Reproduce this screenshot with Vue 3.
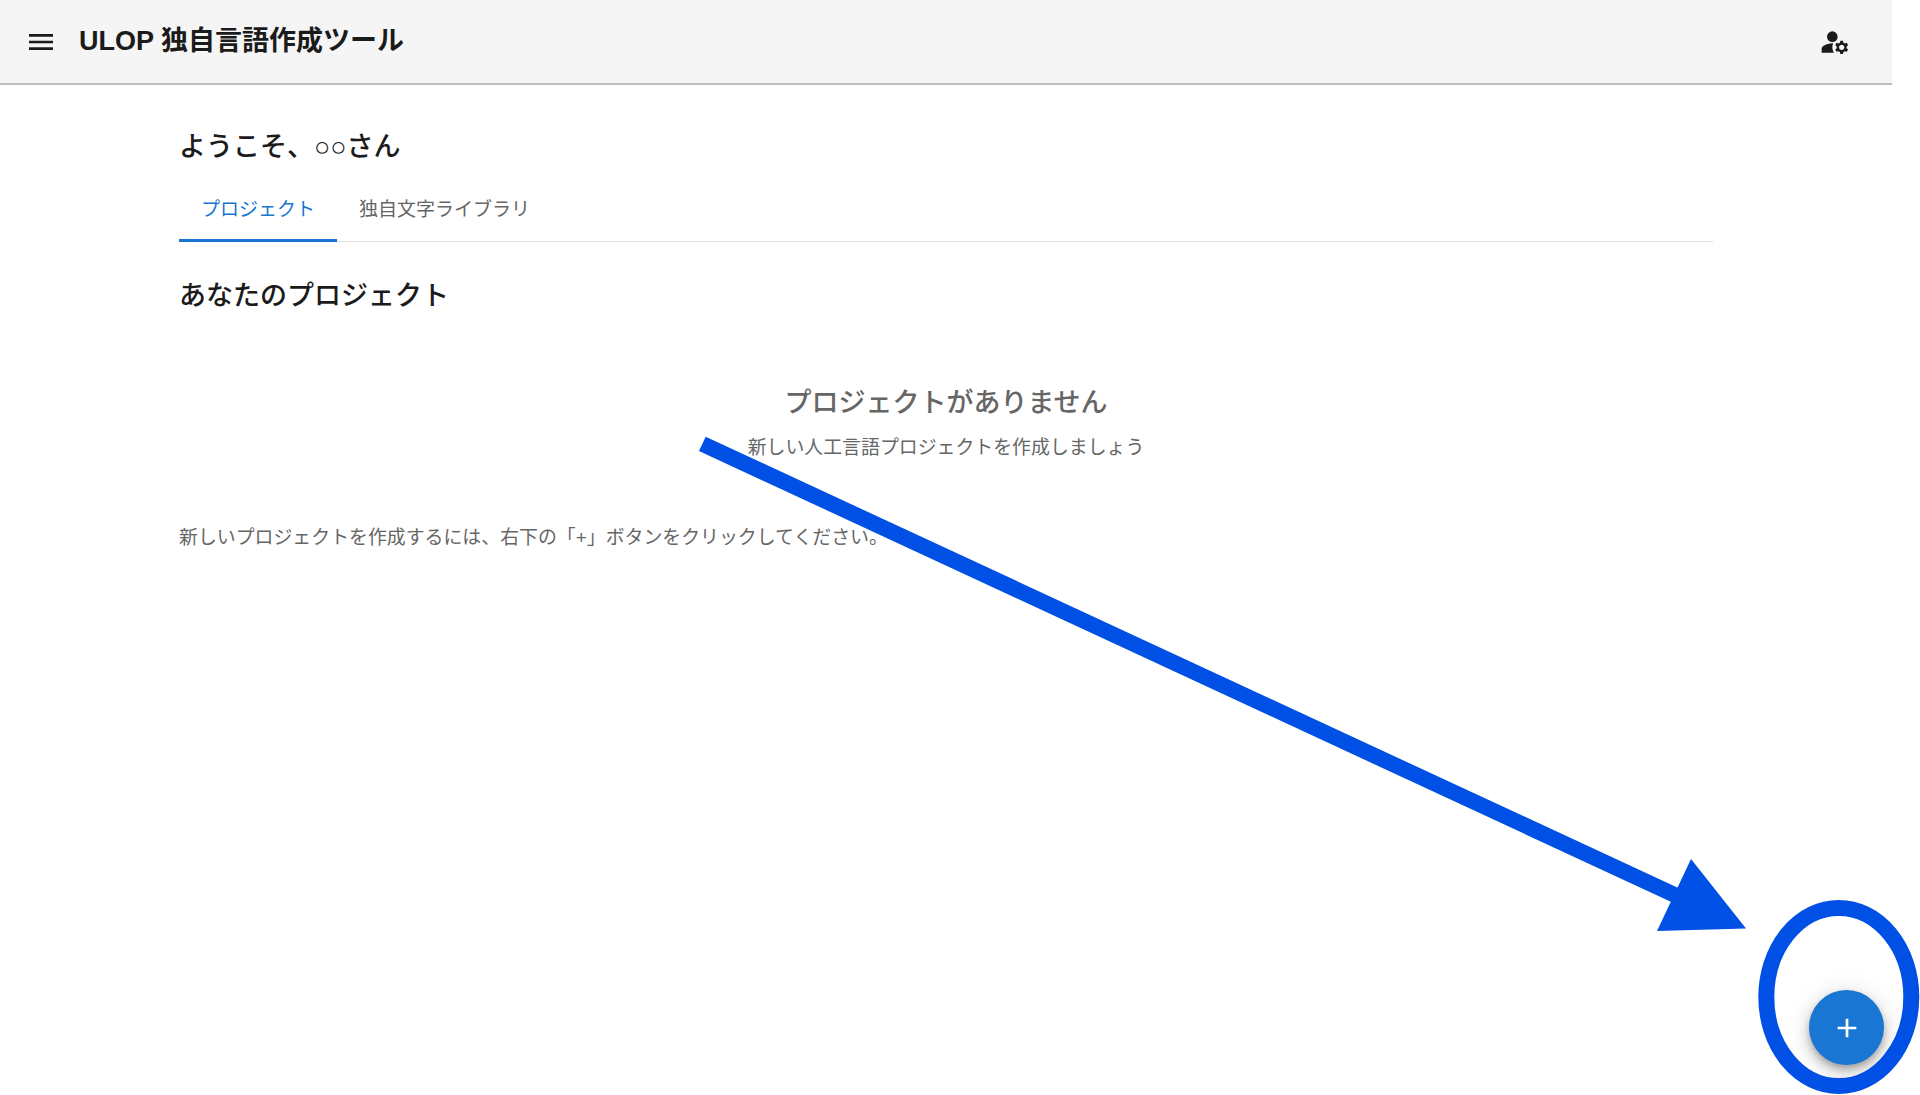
<script setup>
const tabs = [
  { label: 'プロジェクト', active: true },
  { label: '独自文字ライブラリ', active: false },
]
</script>

<template>
  <div class="page">
    <header class="appbar">
      <div class="appbar-left">
        <svg class="icon" viewBox="0 0 24 24" aria-hidden="true">
          <path d="M3 18h18v-2H3zm0-5h18v-2H3zm0-7v2h18V6z" />
        </svg>
        <span class="app-title">ULOP 独自言語作成ツール</span>
      </div>
      <svg class="icon" viewBox="0 0 24 24" aria-hidden="true">
        <circle cx="10" cy="8" r="4" />
        <path d="M10.67 13.02c-.22-.01-.44-.02-.67-.02-2.42 0-4.68.67-6.61 1.82-.88.52-1.39 1.5-1.39 2.53V20h9.26c-.79-1.13-1.26-2.51-1.26-4 0-1.07.25-2.07.67-2.98z" />
        <path d="M20.75 16c0-.22-.03-.42-.06-.63l1.14-1.01-1-1.73-1.45.49c-.32-.27-.68-.48-1.08-.63L18 11h-2l-.3 1.49c-.4.15-.76.36-1.08.63l-1.45-.49-1 1.73 1.14 1.01c-.03.21-.06.41-.06.63s.03.42.06.63l-1.14 1.01 1 1.73 1.45-.49c.32.27.68.48 1.08.63L16 21h2l.3-1.49c.4-.15.76-.36 1.08-.63l1.45.49 1-1.73-1.14-1.01c.03-.21.06-.41.06-.63zM17 18c-1.1 0-2-.9-2-2s.9-2 2-2 2 .9 2 2-.9 2-2 2z" />
      </svg>
    </header>

    <main class="content">
      <h1 class="welcome">ようこそ、○○さん</h1>
      <nav class="tabs">
        <div v-for="tab in tabs" :key="tab.label" class="tab" :class="{ active: tab.active }">{{ tab.label }}</div>
      </nav>
      <h2 class="section-title">あなたのプロジェクト</h2>
      <div class="empty">
        <div class="empty-title">プロジェクトがありません</div>
        <div class="empty-sub">新しい人工言語プロジェクトを作成しましょう</div>
      </div>
      <p class="hint">新しいプロジェクトを作成するには、右下の「+」ボタンをクリックしてください。</p>
    </main>

    <button class="fab" aria-label="追加">
      <svg viewBox="0 0 24 24" aria-hidden="true"><path d="M19 13h-6v6h-2v-6H5v-2h6V5h2v6h6z" /></svg>
    </button>

    <svg class="annotation" viewBox="0 0 1920 1095" aria-hidden="true">
      <polygon class="shaft" points="705.7,436.7 699,451 1680,906 1687,892" />
      <polygon class="head" points="1691,859 1746,928.5 1657,931" />
      <ellipse class="ring" cx="1838.8" cy="997" rx="72.5" ry="89" />
    </svg>
  </div>
</template>

<style>
html, body { margin: 0; background: #fff; }
</style>

<style scoped>
.page {
  position: relative;
  width: 1920px;
  height: 1095px;
  overflow: hidden;
  background: #fff;
  font-family: "Liberation Sans", "Noto Sans CJK JP", sans-serif;
  color: #1b1b1b;
}
.appbar {
  box-sizing: border-box;
  width: 1892px;
  height: 85px;
  padding: 0 41px 0 25px;
  display: flex;
  align-items: center;
  justify-content: space-between;
  background: #f5f5f5;
  border-bottom: 2px solid #bdbdbd;
}
.appbar-left {
  display: flex;
  align-items: center;
  gap: 22px;
}
.icon {
  width: 32px;
  height: 32px;
  fill: #1b1b1b;
  flex: none;
}
.app-title {
  font-size: 27px;
  font-weight: 700;
  line-height: 1;
}
.content {
  box-sizing: border-box;
  width: 1892px;
  padding: 0 179px;
}
.welcome {
  margin: 44px 0 0;
  font-size: 27px;
  font-weight: 500;
  line-height: 36px;
}
.tabs {
  margin-top: 13px;
  display: flex;
  border-bottom: 1px solid #e0e0e0;
}
.tab {
  padding: 0 22px;
  height: 64px;
  line-height: 64px;
  font-size: 19px;
  color: #666;
  box-sizing: border-box;
  margin-bottom: -1px;
}
.tab.active {
  color: #1976d2;
  border-bottom: 3px solid #1976d2;
}
.section-title {
  margin: 36px 0 0;
  font-size: 27px;
  font-weight: 500;
  line-height: 36px;
}
.empty {
  margin-top: 71px;
  text-align: center;
  color: #666;
}
.empty-title {
  font-size: 27px;
  font-weight: 500;
  line-height: 36px;
}
.empty-sub {
  margin-top: 13px;
  font-size: 18.9px;
  line-height: 28px;
}
.hint {
  margin: 62px 0 0;
  font-size: 18.9px;
  line-height: 28px;
  color: #666;
}
.fab {
  position: absolute;
  left: 1809px;
  top: 990px;
  width: 75px;
  height: 75px;
  border: 0;
  padding: 0;
  border-radius: 50%;
  background: #1976d2;
  display: flex;
  align-items: center;
  justify-content: center;
  box-shadow: 0 4px 7px -1px rgba(0,0,0,.25), 0 8px 14px 1px rgba(0,0,0,.14), 0 2px 24px 2px rgba(0,0,0,.1);
}
.fab svg {
  width: 32px;
  height: 32px;
  fill: #fff;
}
.annotation {
  position: absolute;
  inset: 0;
  width: 1920px;
  height: 1095px;
  pointer-events: none;
}
.shaft, .head { fill: #0050e6; }
.ring {
  fill: none;
  stroke: #0050e6;
  stroke-width: 16;
}
</style>
